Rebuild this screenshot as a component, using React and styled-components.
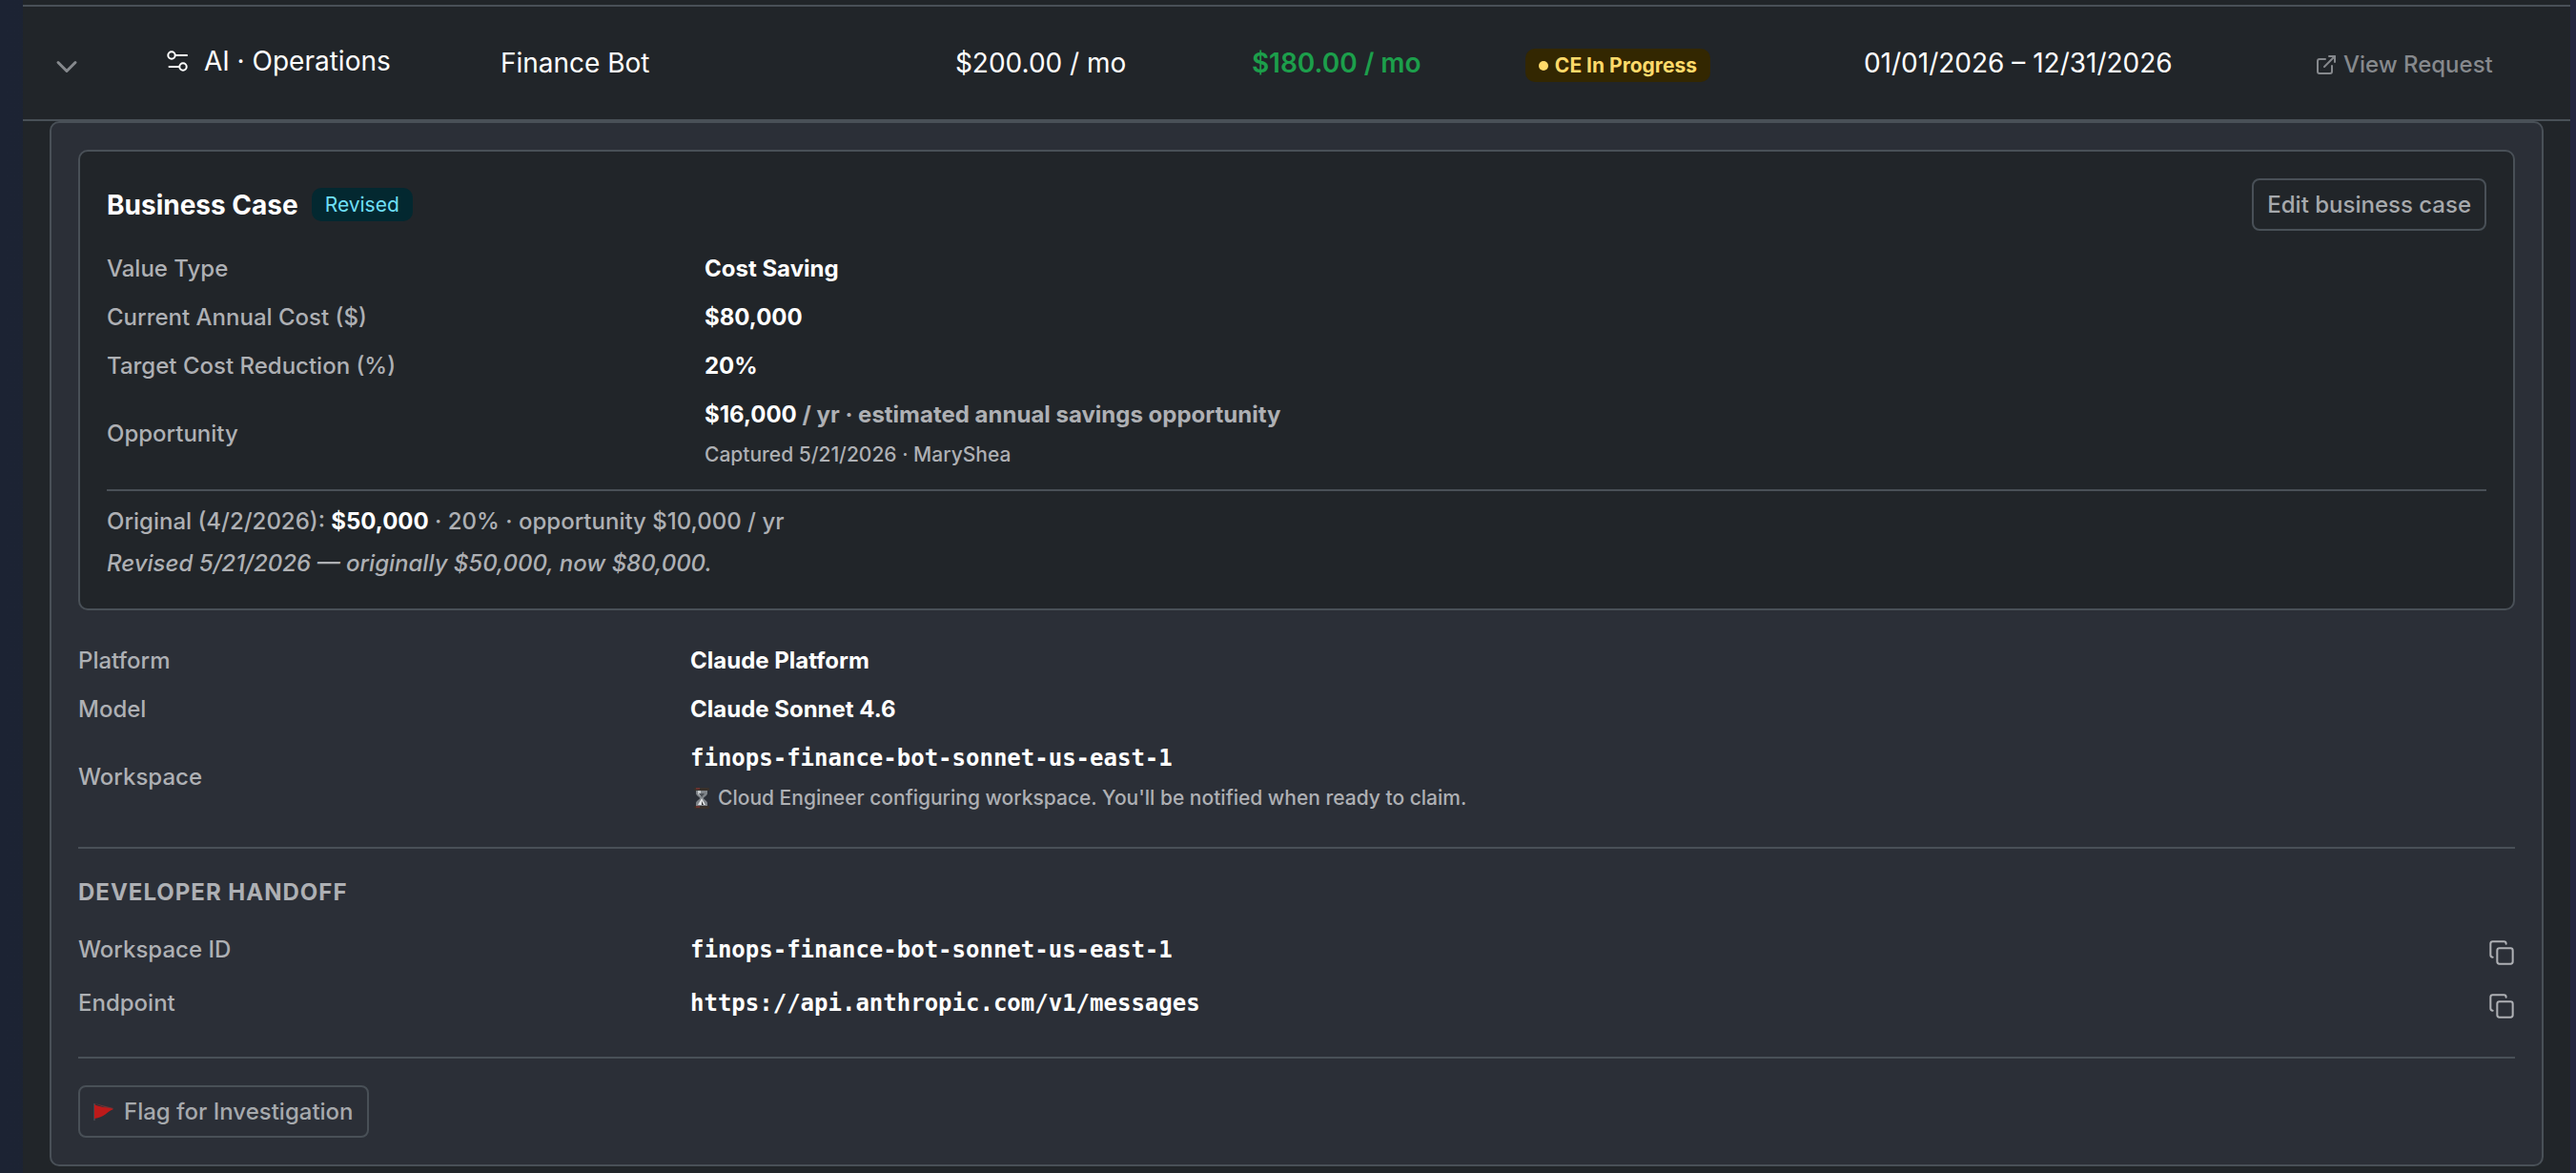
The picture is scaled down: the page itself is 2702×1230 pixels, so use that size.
import styled, { createGlobalStyle } from "styled-components";
import { ChevronDown, Copy, ExternalLink } from "lucide-react";

const GlobalStyle = createGlobalStyle`
    :root {
        --surface: #212529;
        --panel: #2b2f37;
        --line: #495057;
        --muted: #aeb0b4;
        --dim: #86898d;
    }
    * {
        box-sizing: border-box;
    }
    body {
        margin: 0;
        background: linear-gradient(to right, #1c2333, #252740);
        color: #fff;
        font-family: Inter, "Liberation Sans", sans-serif;
        font-size: 24px;
        font-weight: 500;
        line-height: 36px;
    }
    button {
        font: inherit;
        cursor: pointer;
    }
    strong {
        color: #fff;
        font-weight: 700;
    }
`

const Page = styled.main`
    min-height: 100vh;
    margin: 0 6px 0 24px;
    padding: 5px 0 7px;
    background: var(--surface);
`

const Table = styled.table`
    width: 100%;
    table-layout: fixed;
    border-collapse: separate;
    border-spacing: 0;
`
const Col = styled.col`
    width: ${(props) => props.$width};
`
const Cell = styled.td`
    height: 122px;
    padding: 0 0 0 28px;
    border-top: 2px solid var(--line);
    border-bottom: 2px solid var(--line);
    font-size: 28px;
    white-space: nowrap;
    color: ${(props) => (props.$saving ? "#1c9f4b" : "#fff")};
    font-weight: ${(props) => (props.$saving ? 600 : 400)};
`
const DetailCell = styled.td`
    padding: 0 28px;
`

const Toggle = styled.button`
    display: flex;
    padding: 8px 0 0;
    border: 0;
    background: none;
    color: var(--dim);
`
const Category = styled.span`
    display: flex;
    align-items: center;
    gap: 15px;
    padding-bottom: 4px;
`
const RequestLink = styled.a`
    display: flex;
    align-items: center;
    gap: 6px;
    padding-top: 4px;
    color: var(--dim);
    font-size: 24px;
    font-weight: 500;
    text-decoration: none;
`
const Badge = styled.span`
    display: inline-flex;
    align-items: center;
    gap: 7px;
    height: 35px;
    padding: 0 14px;
    border-radius: 10px;
    font-size: 21px;
    font-weight: ${(props) => (props.$warning ? 700 : 400)};
    color: ${(props) => (props.$warning ? "#ffda6a" : "#6edff6")};
    background: ${(props) => (props.$warning ? "#332701" : "#032830")};
`
const Dot = styled.i`
    width: 10px;
    height: 10px;
    border-radius: 50%;
    background: currentColor;
`

const Panel = styled.div`
    padding: 28px;
    border: 2px solid var(--line);
    border-radius: 10px;
    background: var(--panel);
`
const Card = styled.section`
    padding: 28px 28px 21px;
    border: 2px solid var(--line);
    border-radius: 10px;
    background: var(--surface);
`
const CardHeader = styled.header`
    display: flex;
    align-items: center;
    gap: 14px;
    margin-bottom: 15px;
`
const CardTitle = styled.h2`
    margin: 0;
    font-size: 28px;
    font-weight: 700;
`
const OutlineButton = styled.button`
    display: flex;
    align-items: center;
    gap: 10px;
    height: 55px;
    padding: 0 14px;
    border: 2px solid var(--line);
    border-radius: 8px;
    background: none;
    color: #a6a9ad;
`
const EditButton = styled(OutlineButton)`
    margin-left: auto;
`

const Details = styled.dl`
    display: grid;
    gap: ${(props) => props.$gap || "15px"};
    margin: 0;
    padding: ${(props) => props.$padding};
`
const DetailRow = styled.div`
    display: grid;
    grid-template-columns: 1fr 3fr;
    align-items: center;
    column-gap: 4px;
`
const Term = styled.dt`
    color: var(--muted);
`
const Value = styled.dd`
    display: flex;
    align-items: center;
    justify-content: space-between;
    margin: 0;
    font-weight: 700;
`
const Code = styled.code`
    display: block;
    font-family: "DejaVu Sans Mono", monospace;
    font-size: 24px;
    font-weight: 700;
`
const Muted = styled.span`
    color: var(--muted);
`
const Note = styled.small`
    display: flex;
    align-items: center;
    gap: 5px;
    margin-top: 8px;
    color: var(--muted);
    font-size: 21px;
    font-weight: 500;
    line-height: 32px;
`
const CopyButton = styled.button`
    display: flex;
    padding: 7px 0 1px;
    border: 0;
    background: none;
    color: var(--muted);
`

const Rule = styled.hr`
    margin: ${(props) => props.$margin};
    border: 0;
    border-top: 2px solid var(--line);
`
const History = styled.p`
    margin: 0 0 8px;
    color: var(--muted);
    font-style: ${(props) => (props.$italic ? "italic" : "normal")};
`
const SectionTitle = styled.h3`
    margin: 0;
    color: var(--muted);
    font-size: 24px;
    font-weight: 700;
    letter-spacing: 1px;
    text-transform: uppercase;
`

const columns = ["4.6%", "13.1%", "17.85%", "11.64%", "10.74%", "13.29%", "17.7%", "11.08%"]

const caseFields = [
    ["Value Type", "Cost Saving"],
    ["Current Annual Cost ($)", "$80,000"],
    ["Target Cost Reduction (%)", "20%"],
]

const handoff = [
    ["Workspace ID", "finops-finance-bot-sonnet-us-east-1"],
    ["Endpoint", "https://api.anthropic.com/v1/messages"],
]

function SlidersIcon() {
    return (
        <svg width="24" height="24" viewBox="0 0 24 24" fill="none" stroke="currentColor" strokeWidth="2" strokeLinecap="round" aria-hidden="true">
            <circle cx="5" cy="6" r="3.7" />
            <path d="M9 6h12" />
            <circle cx="17" cy="18" r="3.7" />
            <path d="M2.5 18H13" />
        </svg>
    )
}

function HourglassIcon() {
    return (
        <svg width="24" height="24" viewBox="-1 0 24 24" aria-hidden="true">
            <path d="M5 3h12v4c0 2-4 4-4 5s4 3 4 5v4H5v-4c0-2 4-4 4-5S5 9 5 7z" fill="#7f8489" />
            <path d="M7 4h3v3c0 1 1 3 1 4-1-1-4-3-4-4z" fill="#c3c7ca" />
            <path d="M8 7h6l-3 4z" fill="#4c5157" />
            <path d="M11 12l4 7H7z" fill="#e1e3e4" />
            <path d="M11 15l2 4h-2z" fill="#2d2e2f" />
            <rect x="3" y="1" width="16" height="3" rx="1" fill="#38302a" />
            <rect x="3" y="20" width="16" height="3" rx="1" fill="#38302a" />
            <path d="M5 2h4M5 21h4" stroke="#963535" />
        </svg>
    )
}

function FlagIcon() {
    return (
        <svg width="22" height="20" viewBox="0 0 22 20" aria-hidden="true">
            <path d="M1 1v18" stroke="#555b61" strokeWidth="1" />
            <path d="M1 1l20 5-2 2z" fill="#6d3436" />
            <path d="M1 2c5 3 12 3 20 5-6 2-10 9-20 10z" fill="#bd1a1a" />
        </svg>
    )
}

export default function App() {
    return (
        <>
            <GlobalStyle />
            <Page>
                <Table>
                    <colgroup>
                        {columns.map((width, i) => <Col key={i} $width={width} />)}
                    </colgroup>
                    <tbody>
                        <tr>
                            <Cell>
                                <Toggle aria-label="Collapse row" aria-expanded="true">
                                    <ChevronDown size={36} strokeWidth={2} />
                                </Toggle>
                            </Cell>
                            <Cell>
                                <Category><SlidersIcon />AI · Operations</Category>
                            </Cell>
                            <Cell>Finance Bot</Cell>
                            <Cell>$200.00 / mo</Cell>
                            <Cell $saving>$180.00 / mo</Cell>
                            <Cell><Badge $warning><Dot />CE In Progress</Badge></Cell>
                            <Cell>01/01/2026 – 12/31/2026</Cell>
                            <Cell>
                                <RequestLink href="#request"><ExternalLink size={24} strokeWidth={2} />View Request</RequestLink>
                            </Cell>
                        </tr>
                        <tr>
                            <DetailCell colSpan={8}>
                                <Panel>
                                    <Card>
                                        <CardHeader>
                                            <CardTitle>Business Case</CardTitle>
                                            <Badge>Revised</Badge>
                                            <EditButton>Edit business case</EditButton>
                                        </CardHeader>
                                        <Details $padding="7px 0">
                                            {caseFields.map(([label, value]) => (
                                                <DetailRow key={label}>
                                                    <Term>{label}</Term>
                                                    <Value>{value}</Value>
                                                </DetailRow>
                                            ))}
                                            <DetailRow>
                                                <Term>Opportunity</Term>
                                                <Value>
                                                    <div>
                                                        <strong>$16,000</strong> <Muted>/ yr · estimated annual savings opportunity</Muted>
                                                        <Note>Captured 5/21/2026 · MaryShea</Note>
                                                    </div>
                                                </Value>
                                            </DetailRow>
                                        </Details>
                                        <Rule $margin="13px 0 14px" />
                                        <History>Original (4/2/2026): <strong>$50,000</strong> · 20% · opportunity $10,000 / yr</History>
                                        <History $italic>Revised 5/21/2026 — originally $50,000, now $80,000.</History>
                                    </Card>
                                    <Details $padding="35px 0">
                                        <DetailRow>
                                            <Term>Platform</Term>
                                            <Value>Claude Platform</Value>
                                        </DetailRow>
                                        <DetailRow>
                                            <Term>Model</Term>
                                            <Value>Claude Sonnet 4.6</Value>
                                        </DetailRow>
                                        <DetailRow>
                                            <Term>Workspace</Term>
                                            <Value>
                                                <div>
                                                    <Code>finops-finance-bot-sonnet-us-east-1</Code>
                                                    <Note><HourglassIcon />Cloud Engineer configuring workspace. You'll be notified when ready to claim.</Note>
                                                </div>
                                            </Value>
                                        </DetailRow>
                                    </Details>
                                    <Rule $margin="0 0 28px" />
                                    <SectionTitle>Developer Handoff</SectionTitle>
                                    <Details $gap="20px" $padding="24px 0 38px">
                                        {handoff.map(([label, value]) => (
                                            <DetailRow key={label}>
                                                <Term>{label}</Term>
                                                <Value>
                                                    <Code>{value}</Code>
                                                    <CopyButton aria-label={`Copy ${label}`}><Copy size={28} strokeWidth={1.75} /></CopyButton>
                                                </Value>
                                            </DetailRow>
                                        ))}
                                    </Details>
                                    <Rule $margin="0 0 28px" />
                                    <OutlineButton><FlagIcon />Flag for Investigation</OutlineButton>
                                </Panel>
                            </DetailCell>
                        </tr>
                    </tbody>
                </Table>
            </Page>
        </>
    )
}
